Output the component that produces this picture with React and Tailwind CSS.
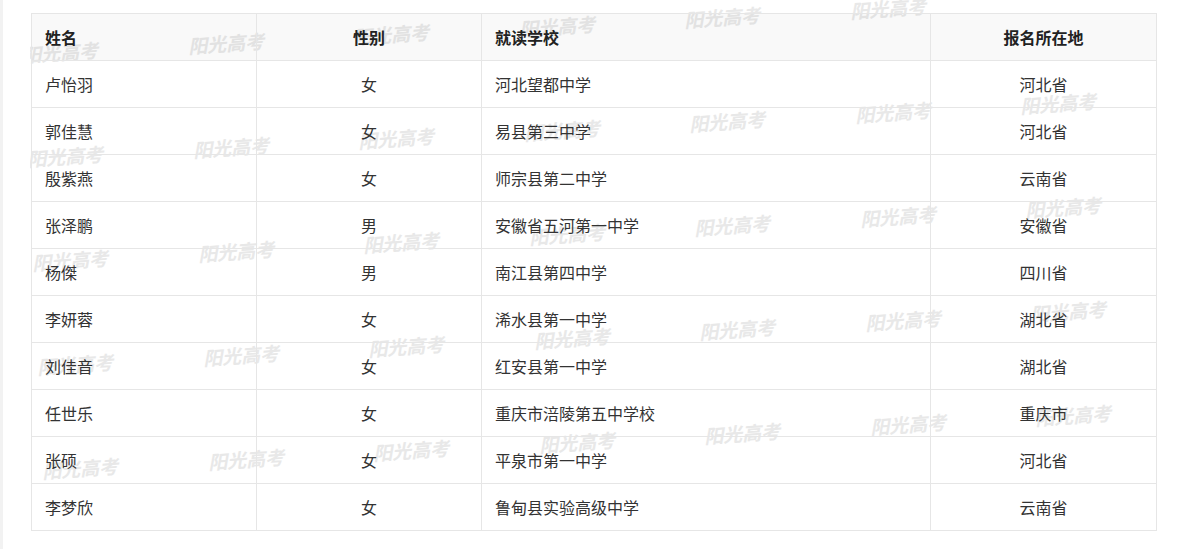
import React from 'react';

const rows = [
  { name: '卢怡羽', sex: '女', school: '河北望都中学', place: '河北省' },
  { name: '郭佳慧', sex: '女', school: '易县第三中学', place: '河北省' },
  { name: '殷紫燕', sex: '女', school: '师宗县第二中学', place: '云南省' },
  { name: '张泽鹏', sex: '男', school: '安徽省五河第一中学', place: '安徽省' },
  { name: '杨傑', sex: '男', school: '南江县第四中学', place: '四川省' },
  { name: '李妍蓉', sex: '女', school: '浠水县第一中学', place: '湖北省' },
  { name: '刘佳音', sex: '女', school: '红安县第一中学', place: '湖北省' },
  { name: '任世乐', sex: '女', school: '重庆市涪陵第五中学校', place: '重庆市' },
  { name: '张硕', sex: '女', school: '平泉市第一中学', place: '河北省' },
  { name: '李梦欣', sex: '女', school: '鲁甸县实验高级中学', place: '云南省' },
];

// watermark grid: 5 bands, 7 marks each, drifting up to the right
const marks = [];
for (let b = 0; b < 5; b++) {
  for (let i = 0; i < 7; i++) {
    if (b === 0 && i === 6) continue;
    marks.push({ key: `${b}-${i}`, left: -8 + 5 * b + 165.5 * i, top: 42 + 104 * b - 8.8 * i });
  }
}

export default function App() {
  return (
    <div
      className="relative w-[1180px] h-[549px] bg-white flex overflow-hidden"
      style={{ fontFamily: '"Noto Sans CJK SC", "Liberation Sans", sans-serif' }}
    >
      {/* 阳光高考 watermark, behind the table */}
      <div className="pointer-events-none absolute left-[30px] top-0 right-0 bottom-0 overflow-hidden z-0">
        {marks.map((m) => (
          <span
            key={m.key}
            className="absolute whitespace-nowrap text-[19px] leading-[20px] font-bold italic text-[#e8e8e8] -rotate-[4deg]"
            style={{ left: m.left, top: m.top }}
          >
            阳光高考
          </span>
        ))}
      </div>

      <div className="relative z-10 w-[3px] h-full bg-[#f2f2f2]" />

      <div className="relative z-10 pl-[28px] pt-[13px]">
        <table className="table-fixed border-collapse w-[1125px] text-[16px] text-[#333]">
          <colgroup>
            <col className="w-[225px]" />
            <col className="w-[225px]" />
            <col className="w-[449px]" />
            <col className="w-[226px]" />
          </colgroup>
          <thead>
            <tr className="bg-black/[0.025] text-[#222]">
              <th className="h-[47px] border border-[#e6e6e6] px-[13px] text-left font-bold">姓名</th>
              <th className="h-[47px] border border-[#e6e6e6] px-[13px] text-center font-bold">性别</th>
              <th className="h-[47px] border border-[#e6e6e6] px-[13px] text-left font-bold">就读学校</th>
              <th className="h-[47px] border border-[#e6e6e6] px-[13px] text-center font-bold">报名所在地</th>
            </tr>
          </thead>
          <tbody>
            {rows.map((r) => (
              <tr key={r.name}>
                <td className="h-[47px] border border-[#e6e6e6] px-[13px]">{r.name}</td>
                <td className="h-[47px] border border-[#e6e6e6] px-[13px] text-center">{r.sex}</td>
                <td className="h-[47px] border border-[#e6e6e6] px-[13px]">{r.school}</td>
                <td className="h-[47px] border border-[#e6e6e6] px-[13px] text-center">{r.place}</td>
              </tr>
            ))}
          </tbody>
        </table>
      </div>
    </div>
  );
}
